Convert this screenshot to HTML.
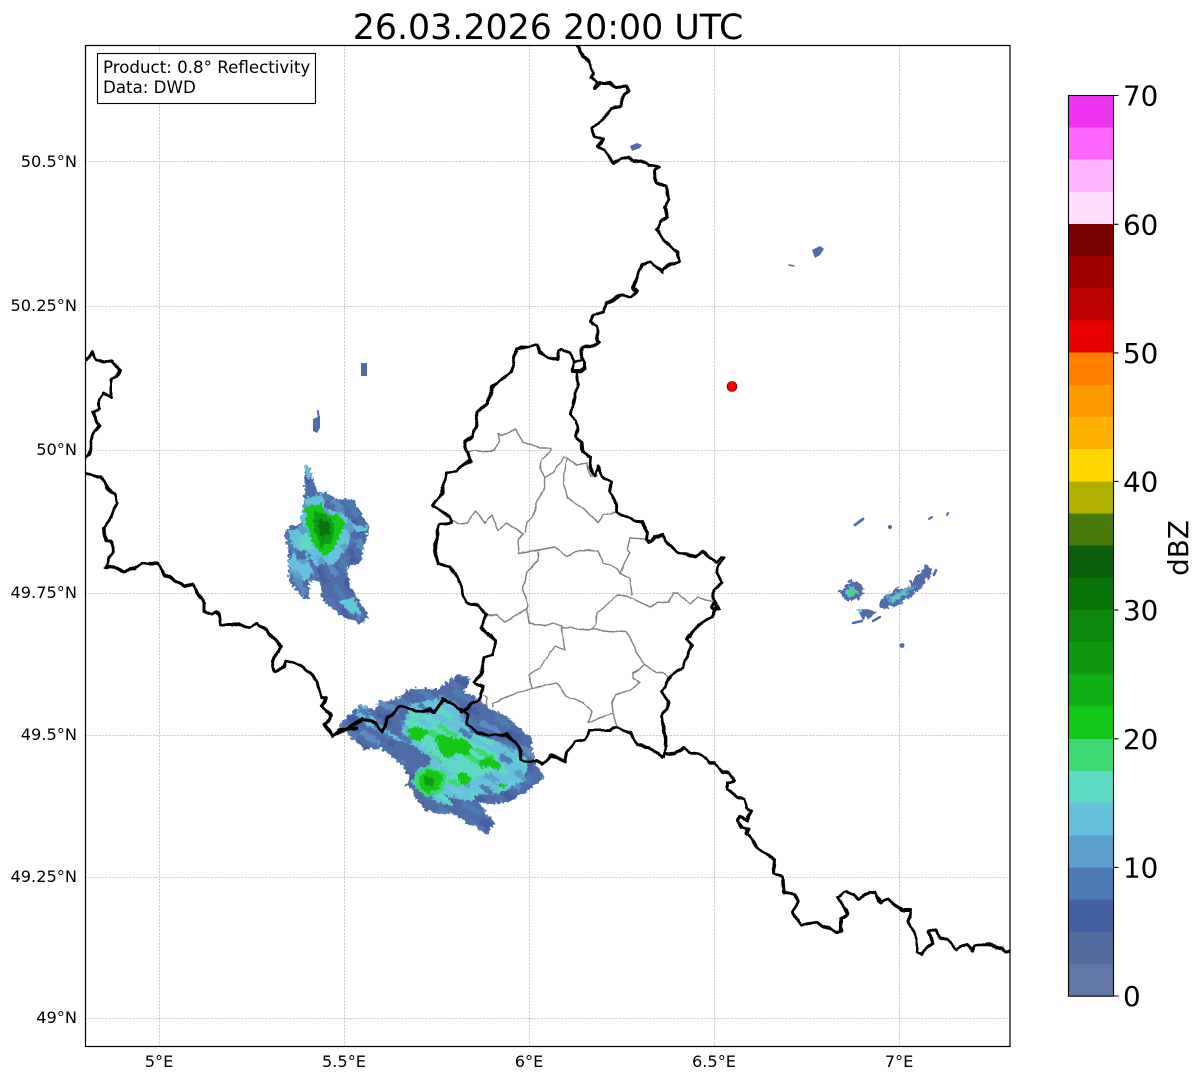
<!DOCTYPE html>
<html><head><meta charset="utf-8"><title>Radar</title>
<style>
html,body{margin:0;padding:0;background:#fff;width:1202px;height:1081px;overflow:hidden}
svg{display:block}
text{font-family:"DejaVu Sans","Liberation Sans",sans-serif;fill:#000}
</style></head><body>
<svg width="1202" height="1081" viewBox="0 0 1202 1081" xmlns="http://www.w3.org/2000/svg">
<defs>
<clipPath id="ax"><rect x="85.500" y="45.500" width="924.500" height="1001"/></clipPath>
<filter id="jag" filterUnits="userSpaceOnUse" x="80" y="40" width="940" height="1010"><feTurbulence type="turbulence" baseFrequency="0.2" numOctaves="1" seed="7"/><feDisplacementMap in="SourceGraphic" scale="7" xChannelSelector="R" yChannelSelector="G"/></filter>
<filter id="wig" filterUnits="userSpaceOnUse" x="70" y="30" width="960" height="1030"><feTurbulence type="fractalNoise" baseFrequency="0.11" numOctaves="1" seed="3"/><feDisplacementMap in="SourceGraphic" scale="5" xChannelSelector="R" yChannelSelector="G"/></filter>
<filter id="wig2" filterUnits="userSpaceOnUse" x="70" y="30" width="960" height="1030"><feTurbulence type="fractalNoise" baseFrequency="0.14" numOctaves="1" seed="9"/><feDisplacementMap in="SourceGraphic" scale="2.500" xChannelSelector="R" yChannelSelector="G"/></filter>
<pattern id="blue" patternUnits="userSpaceOnUse" width="48" height="36" patternTransform="rotate(32)">
<rect width="48" height="36" fill="#4f6ca8"/>
<rect x="0" y="0" width="20" height="6" fill="#4e7db5"/><rect x="24" y="6" width="18" height="6" fill="#4560a2"/><rect x="8" y="12" width="24" height="6" fill="#5573ad"/><rect x="30" y="18" width="18" height="6" fill="#4e7db5"/><rect x="0" y="24" width="16" height="6" fill="#4560a2"/><rect x="20" y="30" width="22" height="6" fill="#5a8cbe"/>
</pattern>
<pattern id="blue1" patternUnits="userSpaceOnUse" width="48" height="36" patternTransform="rotate(60)">
<rect width="48" height="36" fill="#4f6ca8"/>
<rect x="0" y="0" width="20" height="6" fill="#4e7db5"/><rect x="24" y="6" width="18" height="6" fill="#4560a2"/><rect x="8" y="12" width="24" height="6" fill="#5573ad"/><rect x="30" y="18" width="18" height="6" fill="#4e7db5"/><rect x="0" y="24" width="16" height="6" fill="#4560a2"/><rect x="20" y="30" width="22" height="6" fill="#5a8cbe"/>
</pattern>
<pattern id="lt" patternUnits="userSpaceOnUse" width="48" height="36" patternTransform="rotate(32)">
<rect width="48" height="36" fill="#66c2dc"/>
<rect x="0" y="0" width="18" height="6" fill="#5aa0c8"/><rect x="22" y="6" width="20" height="6" fill="#60d9c4"/><rect x="6" y="12" width="14" height="6" fill="#4e7db5"/><rect x="28" y="18" width="16" height="6" fill="#5aa0c8"/><rect x="2" y="24" width="20" height="6" fill="#60d9c4"/><rect x="26" y="30" width="18" height="6" fill="#70c8e0"/>
</pattern>
<pattern id="lt1" patternUnits="userSpaceOnUse" width="40" height="28" patternTransform="rotate(60)">
<rect width="40" height="28" fill="#66c2dc"/>
<rect x="0" y="0" width="18" height="7" fill="#5aa0c8"/><rect x="24" y="14" width="14" height="7" fill="#5aa0c8"/>
</pattern>
<pattern id="teal" patternUnits="userSpaceOnUse" width="44" height="30" patternTransform="rotate(32)">
<rect width="44" height="30" fill="#60d9c4"/>
<rect x="0" y="0" width="20" height="5" fill="#3ed873"/><rect x="24" y="10" width="16" height="5" fill="#66c2dc"/><rect x="6" y="20" width="22" height="5" fill="#3ed873"/><rect x="30" y="25" width="14" height="5" fill="#66c2dc"/>
</pattern>
</defs>
<rect width="1202" height="1081" fill="#fff"/>
<text x="548" y="39" font-size="34.800" text-anchor="middle">26.03.2026 20:00 UTC</text>

<g clip-path="url(#ax)">
<!-- grid -->
<g stroke="#bdbdbd" stroke-width="0.8" stroke-dasharray="2.2 1.2" fill="none">
<path d="M159.500 45V1047M344.500 45V1047M529.500 45V1047M714.500 45V1047M899.500 45V1047"/>
<path d="M85 161.500H1010M85 306.500H1010M85 450.500H1010M85 593.500H1010M85 735.500H1010M85 877.500H1010M85 1018.500H1010"/>
</g>

<!-- radar -->
<g filter="url(#jag)" transform="translate(-1 -1)">
<!-- blob 1 -->
<polygon fill="url(#blue1)" points="303,465 308,465 315,490 325,492 335,497 352,498 368,527 363,543 360,560 345,567 350,587 368,615 358,623 337,613 322,600 318,580 308,580 308,597 302,598 288,580 287,553 284,528 300,522 303,490"/>
<polygon fill="url(#lt1)" points="302,497 320,493 325,507 342,513 353,523 367,526 363,530 350,530 345,547 333,562 313,565 307,547 308,563 312,572 302,580 290,573 288,558 293,547 287,530 300,525"/>
<polygon fill="#66c2dc" points="303,465 308,465 310,478 305,478"/>
<polygon fill="#60d9c4" points="297,533 307,532 312,547 300,547"/>
<polygon fill="#4f6ca8" points="293,548 305,550 305,557 295,558"/>
<polygon fill="#5ec9d8" points="338,600 352,595 360,612 350,613"/>
<polygon fill="#12c818" points="305,505 320,503 325,513 338,513 344,523 333,547 323,555 312,543 305,523"/>
<polygon fill="#0e9c12" points="312,510 325,513 333,523 330,540 320,547 312,527"/>
<polygon fill="#0a730c" points="316,518 328,520 328,532 320,538"/>
<!-- blob 2 -->
<polygon fill="url(#blue)" points="338,722 360,703 373,710 377,700 395,698 410,687 427,687 437,688 458,672 469,678 462,690 477,697 487,707 503,713 530,737 533,757 542,777 530,787 510,800 490,803 477,800 493,822 487,833 467,823 450,812 437,812 425,810 405,783 408,775 397,760 380,747 363,748 340,727"/>
<polygon fill="url(#lt)" points="353,708 363,704 378,723 397,737 410,702 430,698 443,698 462,713 468,730 497,740 525,755 525,778 497,793 477,792 467,807 430,800 410,782 418,767 430,763 400,742 380,730 365,725"/>
<polygon fill="#4f6ca8" points="395,738 410,743 430,757 430,763 410,768 393,750"/>
<polygon fill="url(#teal)" points="402,720 425,712 445,724 468,738 495,752 498,768 480,775 455,785 430,775 440,762 420,745"/>
<polygon fill="#3ed873" points="413,773 428,765 446,772 442,790 427,796 414,786"/>
<polygon fill="#12c818" points="406,728 413,725 427,730 418,740 410,738"/>
<polygon fill="#12c818" points="435,735 440,732 453,738 463,737 472,747 467,755 457,752 445,757 437,748"/>
<polygon fill="#12c818" points="477,760 487,755 500,762 497,769 487,765 479,767"/>
<polygon fill="#12c818" points="417,775 427,768 442,773 438,787 428,793 418,785"/>
<polygon fill="#12c818" points="455,773 462,770 470,778 463,784 457,778"/>
<polygon fill="#12c818" points="497,783 505,782 502,787"/>
<polygon fill="#0e9c12" points="422,776 432,776 432,786 424,786"/>
<polygon fill="url(#blue)" points="445,795 470,800 490,820 485,830 462,815"/>
<polygon fill="url(#blue)" points="468,700 490,712 515,725 527,745 515,745 490,725 472,715"/>
<!-- small east -->
<polygon fill="#4f6ca8" points="838,590 850,579 858,581 863,590 858,598 845,600"/>
<polygon fill="#66c2dc" points="843,590 852,585 857,592 848,596"/>
<polygon fill="#3ed873" points="847,589 853,588 855,593 848,594"/>
<polygon fill="#4f6ca8" points="879,598 897,586 899,588 908,585 913,577 926,563 932,570 923,583 912,593 900,602 883,608 879,605"/>
<polygon fill="#5a9cc6" points="884,598 898,590 910,584 915,584 905,594 890,602"/>
<polygon fill="#60c8c8" points="887,595 898,592 907,588 908,590 898,597 890,600"/>
<polygon fill="#4f6ca8" points="857,608 863,607 875,610 868,617 860,618 858,612"/>
<polygon fill="#5ec9d8" points="855,608 860,607 860,611 856,611"/>
</g>
<g fill="none" stroke="#4f6ca8" stroke-linecap="round">
<path d="M853 623L862 621" stroke-width="2.500"/>
<path d="M873 621L880 617" stroke-width="2.500"/>
<path d="M855 525L863 519" stroke-width="2.800"/>
<path d="M929 519L932 517" stroke-width="2"/>
<path d="M947 515L948 513" stroke-width="2"/>
<path d="M789 265L794 266" stroke-width="1.500"/>
<path d="M318 411L319 420" stroke-width="2"/>
<path d="M936 570L934 575" stroke-width="2.500"/>
</g>
<g fill="#4f6ca8">
<circle cx="890" cy="527" r="2"/>
<circle cx="902" cy="645.500" r="2.500"/>
<rect x="361" y="363" width="6" height="13"/>
<polygon points="313,419 320,416 320,428 317,433 313,431"/>
<polygon points="812,250 820,246 824,249 820,255 815,258"/>
<polygon points="630,146 637,143 642,145 640,148 632,151"/>
</g>

<!-- internal grey -->
<g filter="url(#wig2)" fill="none" stroke="#808080" stroke-width="1.400" stroke-linejoin="round" stroke-linecap="round">
<path d="M468 452L475 450L482 452L495 450L500 440L498 433L502 436L515 429L523 442L540 448L551 448L550 453L541 460L540 468L545 478L545 487L537 502L533 517L527 522L525 533"/>
<path d="M545 478L553 472L564 457L567 458L563 483L568 498L585 510L598 523L603 515L618 512"/>
<path d="M567 458L577 465L587 463L590 476L597 476"/>
<path d="M451 520L460 524L467 523L476 511L485 523L492 515L498 531L506 523L518 530L523 534L518 540L519 553L538 550L555 547L567 557L580 550L598 551L603 563L617 568L620 573L630 578L632 595"/>
<path d="M620 573L630 552L627 550L630 538L645 539L648 543"/>
<path d="M538 552L538 560L527 572L525 582L522 588L528 605L527 609L505 622L497 615L488 615"/>
<path d="M527 609L529 623L545 626L552 623L562 626L562 633L565 650L555 646L547 657L540 668L529 674L532 688L517 693L493 703L493 707"/>
<path d="M532 688L557 683L565 695L570 698L583 702L592 712L588 723L613 713L617 728"/>
<path d="M613 713L612 703L615 695L630 690L640 683L633 678L633 673L645 665L657 673L663 673L669 678"/>
<path d="M645 665L638 655L632 642L627 632L608 631L592 629L580 630L570 627L562 628"/>
<path d="M592 629L596 625L597 612L603 608L617 595L627 596L650 607L657 603L669 602L673 593L678 593L690 604L697 597L715 603"/>
<path d="M483 695L487 697L487 707"/>
</g>

<!-- thick borders -->
<g filter="url(#wig)" fill="none" stroke="#000" stroke-width="3" stroke-linejoin="round" stroke-linecap="round" transform="translate(-0.500 -0.500)">
<path d="M578 45L583 57L590 63L594 73L591 78L597 83L595 89L600 83L610 83L617 88L627 87L629 92L622 100L620 107L613 109L603 120L593 128L595 137L603 140L598 147L605 150L613 164L623 159L629 158L635 162L642 161L650 166L659 168L655 172L656 183L667 187L669 200L665 208L667 217L660 223L657 231L665 242L678 253L680 262L673 264L663 270L663 273L651 263L643 265L638 277L634 288L637 292L632 297L623 296L607 303L603 312L594 315L591 322L597 327L598 337L600 343L590 347L583 348L581 357L585 362L586 369L582 372L573 372L575 363L581 360"/>
<path d="M575 361L570 353L562 350L558 352L557 360L547 357L540 353L538 345L517 350L512 373L493 387L488 403L478 412L477 427L473 437L465 443L472 462L462 466L458 472L447 473L443 493L434 506L450 518L451 523L440 525L437 540L435 550L439 565L450 567L458 578L467 603L478 606L487 615L482 628L495 640L494 656L485 657L482 673L475 683L483 687L482 697L470 707L462 712"/>
<path d="M335 735L347 730L363 719L373 722L383 732L389 718L400 706L417 712L430 710L435 713L443 699L455 705L462 710L468 715L468 725L478 733L490 736L507 735L517 743L522 760L525 762L537 761L543 765L552 755L565 762L567 753L577 742L585 740L590 731L610 731L618 728L630 733L638 745L650 748L663 758L667 753L675 755L685 748L690 753L702 755L710 763L715 764L723 772L730 773L735 781L728 783L728 790L738 798L745 800L747 808L752 811L747 820L740 817L738 822L743 828L749 830L747 835L757 847L775 860L774 873L783 877L784 893L795 894L799 902L793 913L802 925L818 923L837 933L842 931L842 920L848 915L843 905L838 897L847 892L860 899L870 893L876 893L882 903L889 900L902 910L912 910L909 922L917 940L917 952L922 955L927 948L933 944L929 933L937 930L940 937L947 940L957 950L967 944L973 952L975 947L988 944L1003 949L1007 953L1012 950"/>
<path d="M665 757L666 740L662 717L670 703L662 692L667 684L672 677L683 668L692 645L687 640L700 625L713 617L717 608L714 600L715 590L722 583L717 573L720 565L725 558L722 557L717 563L703 552L697 557L678 553L665 540L663 535L655 537L650 543L647 541L648 533L643 523L635 522L627 517L618 512L615 500L610 492L612 482L603 477L598 467L595 477L592 472L590 457L583 452L582 443L577 438L578 427L572 415L573 407L575 397L578 383L577 373"/>
<path d="M714 605L718 607L719 609L715 611L712 608Z"/>
<path d="M84 363L93 353L97 361L113 362L121 371L112 380L112 397L103 393L100 400L100 409L93 413L100 426L93 437L90 455L84 460"/>
<path d="M84 474L102 478L107 488L115 495L117 503L112 517L104 528L107 540L111 542L113 553L106 568L110 567L125 572L135 570L142 564L157 564L166 576L185 586L193 584L205 605L205 612L212 615L216 612L220 615L221 625L235 625L250 628L258 623L282 647L273 662L275 672L285 668L287 661L305 668L318 683L322 697L327 698L322 707L332 717L325 725L333 737L339 731L357 728"/>
</g>
<circle cx="732" cy="386.500" r="5" fill="#ff0000" stroke="#000" stroke-width="0.600"/>
</g>
<!-- axes frame -->
<rect x="85.500" y="45.500" width="924.500" height="1001" fill="none" stroke="#000" stroke-width="1.200"/>

<!-- info box -->
<rect x="97.500" y="53.500" width="218" height="50" fill="#fff" stroke="#000" stroke-width="1.100"/>
<text x="103" y="73" font-size="16.670">Product: 0.8° Reflectivity</text>
<text x="103" y="93" font-size="16.670">Data: DWD</text>

<!-- axis labels -->
<g font-size="16.200" text-anchor="end">
<text x="77" y="167">50.5°N</text>
<text x="77" y="311">50.25°N</text>
<text x="77" y="455">50°N</text>
<text x="77" y="598">49.75°N</text>
<text x="77" y="740">49.5°N</text>
<text x="77" y="882">49.25°N</text>
<text x="77" y="1023">49°N</text>
</g>
<g font-size="16.200" text-anchor="middle">
<text x="159" y="1067">5°E</text>
<text x="344" y="1067">5.5°E</text>
<text x="529" y="1067">6°E</text>
<text x="714" y="1067">6.5°E</text>
<text x="899" y="1067">7°E</text>
</g>

<!-- colorbar -->
<g shape-rendering="crispEdges">
<rect x="1068.500" y="95.500" width="45" height="32.400" fill="#ee33ee"/>
<rect x="1068.500" y="127.500" width="45" height="32.400" fill="#ff66ff"/>
<rect x="1068.500" y="159.700" width="45" height="32.400" fill="#ffb3ff"/>
<rect x="1068.500" y="191.900" width="45" height="32.400" fill="#ffddff"/>
<rect x="1068.500" y="224" width="45" height="32.400" fill="#7a0000"/>
<rect x="1068.500" y="256.200" width="45" height="32.400" fill="#9e0000"/>
<rect x="1068.500" y="288.400" width="45" height="32.400" fill="#bd0000"/>
<rect x="1068.500" y="320.500" width="45" height="32.400" fill="#e60000"/>
<rect x="1068.500" y="352.700" width="45" height="32.400" fill="#ff7f00"/>
<rect x="1068.500" y="384.900" width="45" height="32.400" fill="#ff9900"/>
<rect x="1068.500" y="417.100" width="45" height="32.400" fill="#ffb300"/>
<rect x="1068.500" y="449.200" width="45" height="32.400" fill="#ffd700"/>
<rect x="1068.500" y="481.400" width="45" height="32.400" fill="#afb000"/>
<rect x="1068.500" y="513.600" width="45" height="32.400" fill="#4a7a0a"/>
<rect x="1068.500" y="545.700" width="45" height="32.400" fill="#0a5f0a"/>
<rect x="1068.500" y="577.900" width="45" height="32.400" fill="#0a730a"/>
<rect x="1068.500" y="610.100" width="45" height="32.400" fill="#0d880f"/>
<rect x="1068.500" y="642.200" width="45" height="32.400" fill="#0f9810"/>
<rect x="1068.500" y="674.400" width="45" height="32.400" fill="#10b014"/>
<rect x="1068.500" y="706.600" width="45" height="32.400" fill="#10c815"/>
<rect x="1068.500" y="738.800" width="45" height="32.400" fill="#3ed873"/>
<rect x="1068.500" y="770.900" width="45" height="32.400" fill="#60d9c4"/>
<rect x="1068.500" y="803.100" width="45" height="32.400" fill="#66c2dc"/>
<rect x="1068.500" y="835.300" width="45" height="32.400" fill="#5aa0c8"/>
<rect x="1068.500" y="867.400" width="45" height="32.400" fill="#4d7bb3"/>
<rect x="1068.500" y="899.600" width="45" height="32.400" fill="#4560a2"/>
<rect x="1068.500" y="931.800" width="45" height="32.400" fill="#536a9f"/>
<rect x="1068.500" y="964" width="45" height="32" fill="#6376a8"/>
</g>
<rect x="1068.500" y="95.500" width="45" height="900.700" fill="none" stroke="#000" stroke-width="1.100"/>
<path d="M1113.500 95.500h5M1113.500 224.300h5M1113.500 352.900h5M1113.500 481.400h5M1113.500 610.100h5M1113.500 738.800h5M1113.500 867.400h5M1113.500 996h5" stroke="#000" stroke-width="1.100"/>
<g font-size="27.780">
<text x="1123" y="105.500">70</text>
<text x="1123" y="234.500">60</text>
<text x="1123" y="363">50</text>
<text x="1123" y="491.500">40</text>
<text x="1123" y="620">30</text>
<text x="1123" y="749">20</text>
<text x="1123" y="877.500">10</text>
<text x="1123" y="1006">0</text>
</g>
<text transform="translate(1188 548) rotate(-90)" font-size="27.780" text-anchor="middle">dBZ</text>
</svg>
</body></html>
